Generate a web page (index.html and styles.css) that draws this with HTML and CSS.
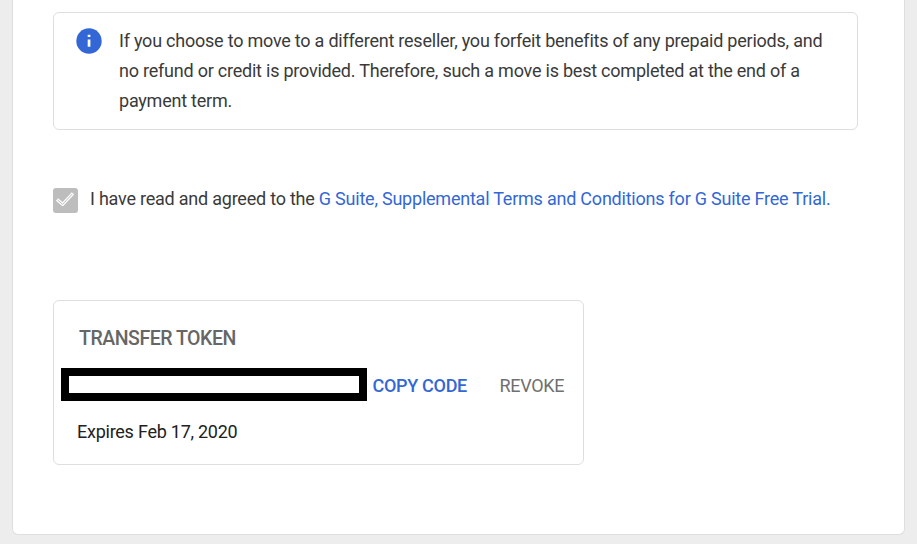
FILE: index.html
```html
<!DOCTYPE html>
<html lang="en">

<head>
    <meta charset="UTF-8">
    <title>Transfer token</title>
    <link rel="stylesheet" href="styles.css">
</head>

<body>
    <main class="card">
        <div class="notice">
            <svg class="notice-icon" width="26" height="26" viewBox="0 0 26 26">
                <circle cx="13" cy="13" r="12.7" fill="#3367d6" />
                <path d="M11.7 6.8h2.7v2.3h-2.7zM11.7 11.5h2.7v7.3h-2.7z" fill="#fff" />
            </svg>
            <p class="notice-text">
                If you choose to move to a different reseller, you forfeit benefits of any prepaid periods, and<br>
                no refund or credit is provided. Therefore, such a move is best completed at the end of a<br>
                payment term.
            </p>
        </div>

        <div class="terms">
            <span class="checkbox">
                <svg width="25" height="25" viewBox="0 0 25 25" fill="none">
                    <path d="M4 11.5L9.6 16.3L20 5.3" stroke="#fff" stroke-width="3.2" />
                    <path d="M4.6 12L9.6 16.3L19.4 5.9" stroke="#bdbdbd" stroke-width="1" />
                </svg>
            </span>
            <span class="terms-text">I have read and agreed to the <a class="terms-link" href="#">G Suite, Supplemental Terms and Conditions for G Suite Free Trial.</a></span>
        </div>

        <section class="token">
            <h2 class="token-title">TRANSFER TOKEN</h2>
            <div class="token-row">
                <div class="token-code"></div>
                <button class="btn copy">COPY CODE</button>
                <button class="btn revoke">REVOKE</button>
            </div>
            <p class="token-expires">Expires Feb 17, 2020</p>
        </section>
    </main>
</body>

</html>
```
FILE: styles.css
```css
* {
    box-sizing: border-box;
}

body {
    margin: 0;
    height: 544px;
    padding: 0 12px 9px;
    background-color: #ededed;
    font-family: Roboto, Arial, sans-serif;
    font-size: 18px;
    letter-spacing: -0.225px;
    color: #3a3a3a;
    overflow: hidden;
}

.card {
    width: 893px;
    height: 535px;
    padding: 12px 46px 0 40px;
    background-color: #fff;
    border: 1px solid #dedede;
    border-top: none;
    border-radius: 0 0 6px 6px;
}

.notice {
    display: flex;
    width: 805px;
    height: 118px;
    padding: 13px 0 0 22px;
    border: 1px solid #dedede;
    border-radius: 6px;
}

.notice-icon {
    flex: none;
    margin: 2px 17px 0 0;
}

.notice-text {
    margin: 0;
    line-height: 30px;
    white-space: nowrap;
}

.terms {
    display: flex;
    margin-top: 58px;
    height: 25px;
    white-space: nowrap;
}

.checkbox {
    flex: none;
    width: 25px;
    height: 25px;
    margin-right: 12px;
    background-color: #bdbdbd;
    border-radius: 3px;
}

.checkbox svg {
    display: block;
}

.terms-text {
    line-height: 21px;
}

.terms-link {
    color: #3367d6;
    text-decoration: none;
}

.token {
    width: 531px;
    height: 165px;
    margin-top: 87px;
    border: 1px solid #dedede;
    border-radius: 6px;
}

.token-title {
    margin: 26px 0 0 25px;
    font-size: 19.5px;
    font-weight: 500;
    line-height: 24px;
    letter-spacing: -0.47px;
    color: #666;
}

.token-row {
    display: flex;
    align-items: center;
    margin: 17px 0 0 7px;
}

.token-code {
    width: 306px;
    height: 33px;
    border: 8px solid #000;
}

.btn {
    padding: 2px 0 0;
    border: none;
    background: none;
    font-family: inherit;
    font-size: 18px;
    letter-spacing: -0.3px;
    cursor: pointer;
}

.copy {
    margin-left: 5.5px;
    font-weight: 500;
    color: #3367d6;
}

.revoke {
    margin-left: 32.5px;
    color: #707070;
}

.token-expires {
    margin: 20px 0 0 23px;
    line-height: 21px;
    letter-spacing: -0.25px;
    color: #212121;
}
```
